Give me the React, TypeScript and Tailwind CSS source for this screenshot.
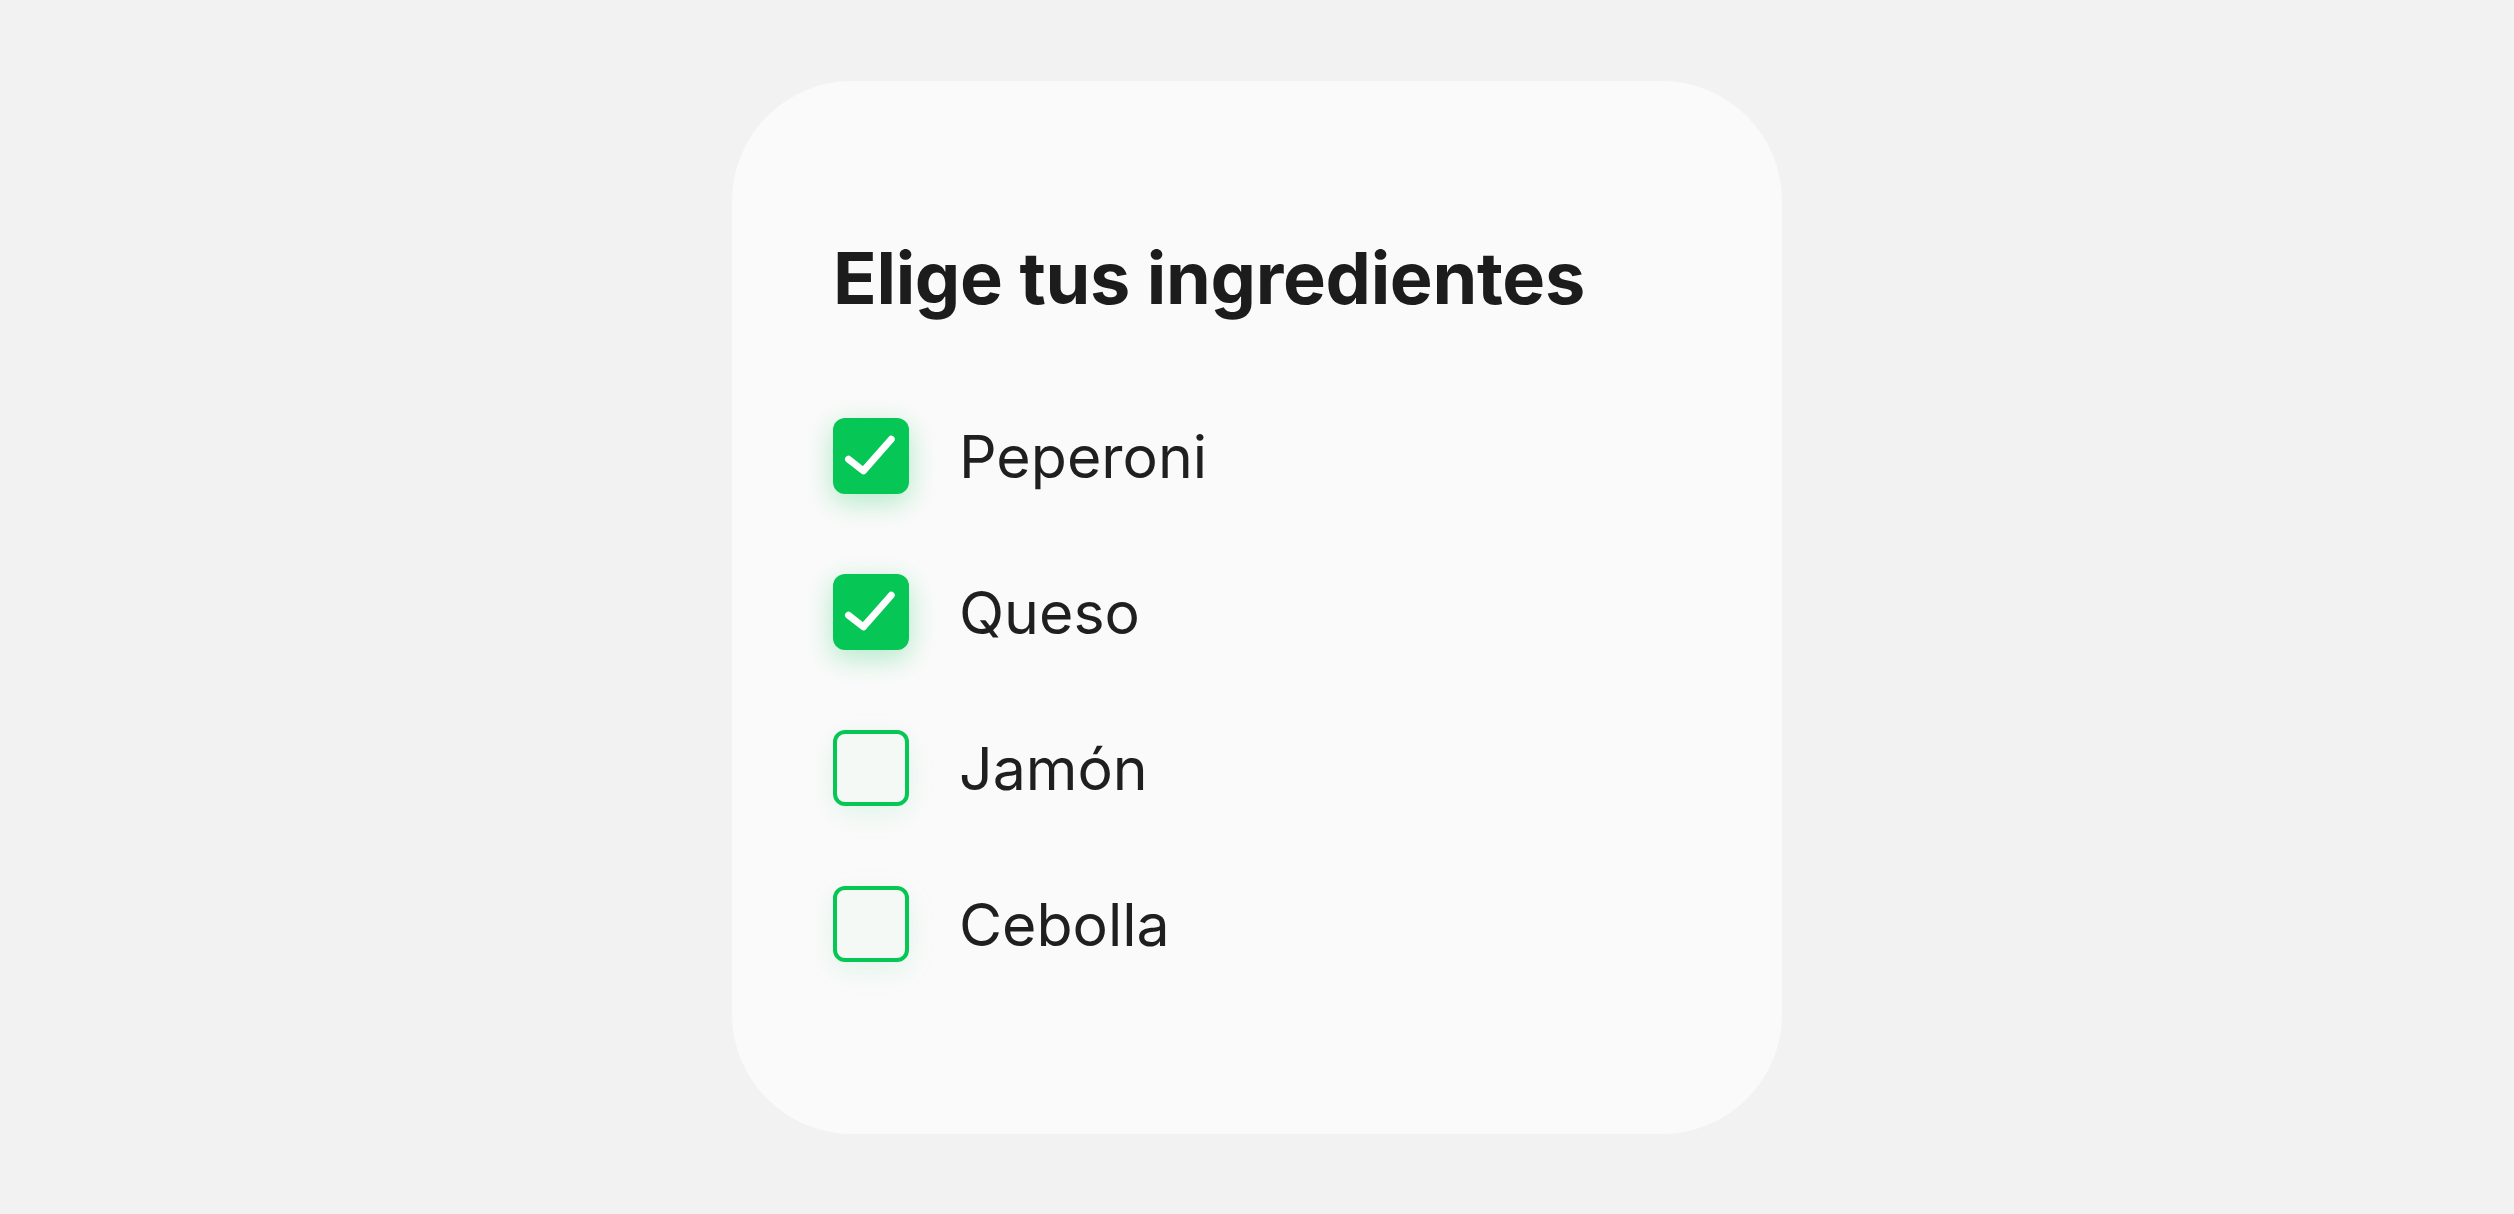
import { useState } from "react";

const INGREDIENTS = [
  { name: "Peperoni", checked: true },
  { name: "Queso", checked: true },
  { name: "Jamón", checked: false },
  { name: "Cebolla", checked: false },
];

function CheckBox({ checked }: { checked: boolean }) {
  if (checked) {
    return (
      <span className="flex h-[76px] w-[76px] shrink-0 items-center justify-center rounded-[12px] bg-[#06c755] shadow-[0_8px_28px_rgba(6,199,85,0.3)]">
        <svg width="76" height="76" viewBox="0 0 24 24" fill="none">
          <path
            d="M4.9 13L9.6 16.7L18.4 6.7"
            stroke="#ffffff"
            strokeWidth="2.2"
            strokeLinecap="round"
            strokeLinejoin="round"
          />
        </svg>
      </span>
    );
  }
  return (
    <span className="block h-[76px] w-[76px] shrink-0 rounded-[12px] border-4 border-[#06c755] bg-[#f5f9f6] shadow-[0_8px_28px_rgba(6,199,85,0.1)]" />
  );
}

export default function App() {
  const [items, setItems] = useState(INGREDIENTS);

  const toggle = (name: string) =>
    setItems((prev) => prev.map((i) => (i.name === name ? { ...i, checked: !i.checked } : i)));

  return (
    <div
      className="flex min-h-screen items-center justify-center bg-[#f2f2f2]"
      style={{ fontFamily: "Inter, 'Noto Sans', sans-serif" }}
    >
      <div className="h-[1053px] w-[1050px] rounded-[120px] bg-[#fafafa] pl-[101px] pt-[161px]">
        <h1 className="text-[72px] font-bold leading-none tracking-[-0.3px] text-[#1c1c1c]">
          Elige tus ingredientes
        </h1>
        <ul className="mt-[104px] flex flex-col gap-[80px]">
          {items.map((item) => (
            <li key={item.name}>
              <button
                type="button"
                onClick={() => toggle(item.name)}
                className="flex items-center gap-[50px] text-left"
              >
                <CheckBox checked={item.checked} />
                <span className="pt-[2px] text-[59px] leading-none font-normal text-[#1f1f1f]">{item.name}</span>
              </button>
            </li>
          ))}
        </ul>
      </div>
    </div>
  );
}
